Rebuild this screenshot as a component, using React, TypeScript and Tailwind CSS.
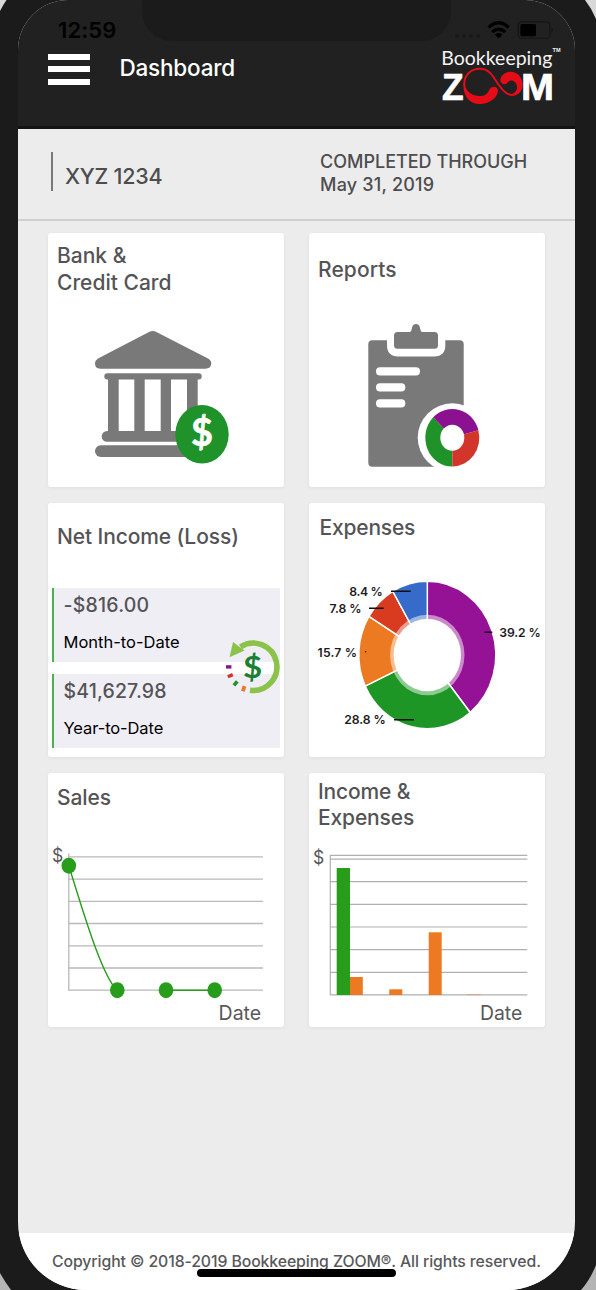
import type { ReactNode } from 'react';

const expenses = [
  { share: 39.2, color: '#951296' },
  { share: 28.8, color: '#1d9625' },
  { share: 15.7, color: '#ec7a22' },
  { share: 7.8, color: '#d93b20' },
  { share: 8.4, color: '#366bc9' },
];

const expenseLabels = [
  { text: '8.4 %', x: 40.2, y: 93, width: 33.6, from: 82, to: 101.7, tickY: 88.3 },
  { text: '7.8 %', x: 20.5, y: 109.7, width: 32, from: 60, to: 74.7, tickY: 105.3 },
  { text: '15.7 %', x: 8.6, y: 153.7, width: 39.4, from: 56.2, to: 57.2, tickY: 148.7 },
  { text: '28.8 %', x: 35.3, y: 221, width: 41.4, from: 85, to: 105, tickY: 216.7 },
  { text: '39.2 %', x: 190.3, y: 134.3, width: 41.4, from: 175.3, to: 183.3, tickY: 129.3 },
];

// Pie wedge on an ellipse, angles in degrees clockwise from the top
function wedge(cx: number, cy: number, rx: number, ry: number, start: number, end: number) {
  const point = (deg: number) => {
    const a = (deg * Math.PI) / 180;
    return `${(cx + rx * Math.sin(a)).toFixed(2)} ${(cy - ry * Math.cos(a)).toFixed(2)}`;
  };
  return `M${cx} ${cy} L${point(start)} A${rx} ${ry} 0 ${end - start > 180 ? 1 : 0} 1 ${point(end)} Z`;
}

function StatusBar() {
  return (
    <div className="flex h-[50px] justify-between">
      <div className="w-[124px] pt-[17px] pl-[40px] text-[22px] leading-[27px] font-semibold tracking-[0.1px] text-black">12:59</div>
      <div className="h-[41px] w-[309px] rounded-b-[30px] bg-[#1b1b1b]" />
      <svg className="h-[50px] w-[124px]" viewBox="451 0 124 50">
        <g fill="#191919">
          <circle cx="457" cy="36" r="2" />
          <circle cx="464" cy="36" r="2" />
          <circle cx="471" cy="36" r="2" />
          <circle cx="478" cy="36" r="2" />
        </g>
        <g fill="none" stroke="#000" strokeWidth="3.4">
          <path d="M488.6 27.4 Q498.7 18.2 508.8 27.4" />
          <path d="M492.2 32 Q498.7 26.4 505.2 32" />
        </g>
        <path d="M494.8 34.6 Q498.7 31.6 502.6 34.6 L498.7 38.6 Z" fill="#000" />
        <rect x="518.2" y="21.8" width="31.6" height="16.6" rx="3.5" fill="none" stroke="#161616" strokeWidth="1.4" />
        <rect x="520.4" y="24" width="15.6" height="12.2" rx="1.5" fill="#000" />
        <path d="M551.6 27.5 Q554 30 551.6 33 Z" fill="#141414" />
      </svg>
    </div>
  );
}

function Logo() {
  return (
    <svg className="h-[64px] w-[126px]" viewBox="436 44 126 64">
      <text x="441.3" y="64.9" fontSize="19" textLength="111" lengthAdjust="spacingAndGlyphs" fill="#f4f4f4" fontFamily="Lato, sans-serif">Bookkeeping</text>
      <text x="552.5" y="51.8" fontSize="6" fontWeight="700" textLength="8" lengthAdjust="spacingAndGlyphs" fill="#f4f4f4" fontFamily="Liberation Sans, sans-serif">TM</text>
      <g fill="#fff" stroke="#fff" strokeWidth="0.7" fontSize="37.4" fontWeight="700" fontFamily="Liberation Sans, sans-serif">
        <text x="441.9" y="99.5" textLength="21.6" lengthAdjust="spacingAndGlyphs">Z</text>
        <text x="521" y="99.5" textLength="33" lengthAdjust="spacingAndGlyphs">M</text>
      </g>
      <path d="M464.3 86 C463.5 75 471 68.8 480 68.8 C491 68.8 494 79 500 86.5 C504 92 507 95 512 95" fill="none" stroke="#e50c17" strokeWidth="2" />
      <path d="M463.4 84 C463 97 470 104 480 104 C489 104 497 98.5 498 91 C497.8 85.6 491.2 85.6 489.2 90 C487 94.5 484 96.6 478.5 96 C470.5 95 465.4 91 465.2 84 Z" fill="#e50c17" />
      <path d="M511.5 96 C518.5 95.8 522.6 91 522.6 85 C522.6 77 517 71.8 511 71.8 C505 71.8 500.8 76 500.3 80 C500.3 84.4 505.8 85.4 507.6 82.6 C509.5 80 513 79.8 515.3 82.6 C518.5 87 517.5 92 511.5 94.2 Z" fill="#e50c17" />
    </svg>
  );
}

function Card({ children }: { children: ReactNode }) {
  return <section className="h-[254px] overflow-hidden rounded-[3px] bg-white shadow-[0_1px_4px_rgba(0,0,0,0.06)]">{children}</section>;
}

function BankIcon() {
  return (
    <svg className="h-[184px] w-[236px]" viewBox="0 70 236 184">
      <g fill="#797979">
        <path d="M101 99 Q104.7 97 108.4 99 L160 125.6 Q163.3 127.6 163.3 130.5 Q162.8 135.7 157.5 135.7 H52.3 Q47.2 135.7 47 130.5 Q47 127.6 50 125.6 Z" />
        <rect x="56.3" y="140.2" width="97.4" height="6.2" rx="3" />
        <rect x="60" y="144" width="10.7" height="56" />
        <rect x="86.3" y="144" width="10.4" height="56" />
        <rect x="112.7" y="144" width="10.3" height="56" />
        <rect x="139" y="144" width="10.7" height="56" />
        <rect x="53.7" y="198" width="102" height="10.8" rx="5.4" />
        <rect x="47" y="212.3" width="116" height="11.7" rx="5.8" />
      </g>
      <ellipse cx="154" cy="201.3" rx="26.7" ry="29.3" fill="#1f9229" />
      <text x="143" y="213" fontSize="38" fontWeight="700" textLength="22" lengthAdjust="spacingAndGlyphs" fill="#fff" stroke="#fff" strokeWidth="0.6" strokeLinejoin="round" fontFamily="Lato, sans-serif">$</text>
    </svg>
  );
}

function ReportIcon() {
  return (
    <svg className="h-[184px] w-[236px]" viewBox="0 70 236 184">
      <rect x="59.3" y="107.2" width="95.4" height="126.5" rx="4" fill="#797979" />
      <path d="M78 106 V112 Q78 123.4 89 123.4 H125.3 Q136.3 123.4 136.3 112 V106 Z" fill="#fff" />
      <path d="M88.5 99 H101 Q102.4 98.4 103 95 Q103.6 91 107 91 Q110.4 91 111 95 Q111.6 98.4 113 99 H125.5 Q129 99 129 102.5 V112.2 Q129 115.7 125.5 115.7 H88.5 Q85 115.7 85 112.2 V102.5 Q85 99 88.5 99 Z" fill="#797979" />
      <g fill="#fff">
        <rect x="67" y="134.3" width="44" height="8.3" rx="4.1" />
        <rect x="67" y="150.3" width="29.3" height="8.1" rx="4" />
        <rect x="67" y="166.3" width="29.3" height="8.1" rx="4" />
        <ellipse cx="143.3" cy="204.7" rx="34.6" ry="34.4" />
      </g>
      <path d={wedge(143.3, 204.7, 27, 28.8, 180, 315)} fill="#1f9229" />
      <path d={wedge(143.3, 204.7, 27, 28.8, 315, 435)} fill="#8b1190" />
      <path d={wedge(143.3, 204.7, 27, 28.8, 75, 180)} fill="#d2352a" />
      <ellipse cx="143.3" cy="204.7" rx="12" ry="13" fill="#fff" />
    </svg>
  );
}

function NetIncomeIcon() {
  return (
    <svg className="absolute top-[130px] left-[170px] h-[66px] w-[66px]" viewBox="170 130 66 66">
      <path d="M202 187.3 A23.7 23.7 0 1 0 192.5 143.8" fill="none" stroke="#8bc34a" strokeWidth="5.6" />
      <path d="M185 139 L196.5 147.4 L181.5 154.2 Z" fill="#8bc34a" />
      <rect x="178" y="162.2" width="5.4" height="3.4" fill="#8b1190" />
      <rect x="179.6" y="171" width="5.4" height="3.4" transform="rotate(-24 182.3 172.7)" fill="#cf3528" />
      <rect x="185" y="178.6" width="5.2" height="3.6" transform="rotate(-50 187.6 180.4)" fill="#1f9229" />
      <rect x="193" y="183.8" width="5.4" height="3.8" transform="rotate(-72 195.7 185.7)" fill="#ec7a22" />
      <text x="195" y="174.8" fontSize="30.5" fontWeight="700" textLength="19.2" lengthAdjust="spacingAndGlyphs" fill="#1b7f34" fontFamily="Lato, sans-serif">$</text>
    </svg>
  );
}

function ExpensesChart() {
  let angle = 0;
  return (
    <svg className="h-[184px] w-[236px]" viewBox="0 70 236 184">
      {expenses.map((slice) => {
        const start = angle;
        angle += (slice.share / 99.9) * 360;
        return <path key={slice.color} d={wedge(118.3, 152, 68.5, 73.7, start, angle)} fill={slice.color} stroke="#fff" strokeWidth="1.5" />;
      })}
      <ellipse cx="118.3" cy="152" rx="37.2" ry="40.2" fill="#fff" fillOpacity="0.5" />
      <ellipse cx="118.3" cy="152" rx="33.7" ry="36.3" fill="#fff" />
      {expenseLabels.map((label) => (
        <g key={label.text}>
          <line x1={label.from} x2={label.to} y1={label.tickY} y2={label.tickY} stroke="#111" strokeWidth="1.5" />
          <text x={label.x} y={label.y} fontSize="12.2" fontWeight="600" textLength={label.width} fill="#1c1c1c">{label.text}</text>
        </g>
      ))}
    </svg>
  );
}

function SalesChart() {
  return (
    <svg className="h-[184px] w-[236px] font-normal" viewBox="0 70 236 184">
      <g stroke="#b9b9bb" strokeWidth="1.3">
        {[83.8, 106.1, 128.3, 150.5, 172.8, 195, 217.2].map((y) => (
          <line key={y} x1="20.8" x2="215" y1={y} y2={y} />
        ))}
        <line x1="20.8" x2="20.8" y1="80.5" y2="217.8" />
      </g>
      <text x="4" y="89" fontSize="18.5" textLength="11.3" lengthAdjust="spacingAndGlyphs" fill="#58585a">$</text>
      <path d="M20.8 92.7 C34 135 54 204 69.3 217.2 M118 217.2 H166.7" fill="none" stroke="#279d1b" strokeWidth="1.4" />
      <g fill="#279d1b">
        <ellipse cx="20.8" cy="92.7" rx="7.3" ry="8" />
        <ellipse cx="69.3" cy="217.2" rx="7.3" ry="8" />
        <ellipse cx="118" cy="217.2" rx="7.3" ry="8" />
        <ellipse cx="166.7" cy="217.2" rx="7.3" ry="8" />
      </g>
      <text x="170.6" y="247" fontSize="20" textLength="42.5" lengthAdjust="spacingAndGlyphs" fill="#58585a">Date</text>
    </svg>
  );
}

function IncomeChart() {
  return (
    <svg className="h-[184px] w-[236px] font-normal" viewBox="0 70 236 184">
      <g stroke="#b0b0b2" strokeWidth="1.2">
        {[82.4, 86.1, 108.7, 131.3, 154, 176.7, 199.3, 221.8].map((y) => (
          <line key={y} x1="21" x2="218.3" y1={y} y2={y} />
        ))}
        <line x1="21.3" x2="21.3" y1="82" y2="222" />
      </g>
      <text x="4" y="91" fontSize="18.5" textLength="11.3" lengthAdjust="spacingAndGlyphs" fill="#58585a">$</text>
      <rect x="27.7" y="95" width="13.3" height="127" fill="#279d1b" />
      <g fill="#ec7a22">
        <rect x="41" y="204" width="12.8" height="18" />
        <rect x="80.3" y="216.3" width="13" height="5.7" />
        <rect x="119.7" y="159.3" width="13" height="62.7" />
        <rect x="158" y="221.4" width="14" height="0.7" fillOpacity="0.6" />
      </g>
      <text x="171" y="247" fontSize="20" textLength="42.3" lengthAdjust="spacingAndGlyphs" fill="#58585a">Date</text>
    </svg>
  );
}

export default function App() {
  return (
    <div className="relative h-[1290px] w-[596px] overflow-hidden bg-[#1b1b1b] pr-[21px] pl-[18px] font-[Inter,sans-serif]">
      <div className="flex h-[1290px] flex-col overflow-hidden rounded-t-[50px] rounded-b-[68px] bg-[#ececec]">
        <header className="h-[129px] border-b-[3px] border-[#141414] bg-[#212121]">
          <StatusBar />
          <div className="-mt-[6px] flex items-start pl-[30px]">
            <button className="mt-[9.5px] flex w-[42px] flex-col gap-[6.5px]" aria-label="Menu">
              <span className="h-[6px] w-full bg-white" />
              <span className="h-[6px] w-full bg-white" />
              <span className="h-[6px] w-full bg-white" />
            </button>
            <h1 className="mt-[10px] ml-[29.5px] flex-1 text-[22.5px] leading-[28px] font-medium tracking-[-0.2px] text-white">Dashboard</h1>
            <div className="mr-[13px]">
              <Logo />
            </div>
          </div>
        </header>

        <div className="flex h-[92px] border-b-2 border-[#d0d0d1] text-[#4d4d4f]">
          <div className="ml-[33px] mt-[23px] flex h-[39px] w-[269px] border-l-2 border-[#79797b] pt-[11px] pl-[12px] text-[21.5px] leading-[26px] font-medium tracking-[-0.25px]">XYZ 1234</div>
          <div className="mt-[22px] text-[18px] leading-[22.5px] font-medium">
            <div>COMPLETED THROUGH</div>
            <div className="tracking-[0.2px]">May 31, 2019</div>
          </div>
        </div>

        <main className="grid flex-1 grid-cols-[236px_236px] content-start gap-x-[25px] gap-y-[16px] pt-[12px] pl-[30px] text-[21px] leading-[26.5px] font-medium text-[#545456]">
          <Card>
            <h2 className="h-[70px] pt-[10px] pl-[9px]">Bank &amp;<br />Credit Card</h2>
            <BankIcon />
          </Card>
          <Card>
            <h2 className="h-[70px] pt-[23.5px] pl-[9px] tracking-[0.1px]">Reports</h2>
            <ReportIcon />
          </Card>
          <Card>
            <div className="relative h-[254px] pr-[4px] pl-[4px]">
              <h2 className="h-[85px] pt-[20.5px] pl-[5px] tracking-[-0.1px]">Net Income (Loss)</h2>
              <div className="h-[74px] border-l-2 border-[#4caf50] bg-[#efeef5] pt-[5px] pl-[9.5px]">
                <div className="text-[19.5px] leading-[24px] tracking-[0.2px]">-$816.00</div>
                <div className="mt-[14.5px] text-[16.5px] leading-[20px] font-normal text-black">Month-to-Date</div>
              </div>
              <div className="mt-[12px] h-[74px] border-l-2 border-[#4caf50] bg-[#efeef5] pt-[5px] pl-[9.5px]">
                <div className="text-[19.5px] leading-[24px] tracking-[0.15px]">$41,627.98</div>
                <div className="mt-[14.5px] text-[16.5px] leading-[20px] font-normal tracking-[-0.1px] text-black">Year-to-Date</div>
              </div>
              <NetIncomeIcon />
            </div>
          </Card>
          <Card>
            <h2 className="h-[70px] pt-[12px] pl-[10.5px] tracking-[-0.2px]">Expenses</h2>
            <ExpensesChart />
          </Card>
          <Card>
            <h2 className="h-[70px] pt-[12px] pl-[9px] tracking-[-0.1px]">Sales</h2>
            <SalesChart />
          </Card>
          <Card>
            <h2 className="h-[70px] pt-[5.5px] pl-[9px] tracking-[-0.15px]">Income &amp;<br />Expenses</h2>
            <IncomeChart />
          </Card>
        </main>

        <footer className="relative h-[57px] bg-white pt-[19px] pl-[34px] text-[15.8px] leading-[20px] font-medium tracking-[-0.09px] whitespace-nowrap text-[#58585a]">
          Copyright © 2018-2019 Bookkeeping ZOOM®. All rights reserved.
          <div className="absolute top-[36px] left-[179px] h-[8px] w-[199px] rounded-full bg-black" />
        </footer>
      </div>

      {/* Background showing past the outer corners of the device */}
      <svg className="pointer-events-none absolute inset-0 h-[1290px] w-[596px]" viewBox="0 0 596 1290">
        <path d="M0 0 H6.5 Q3 5 0 11 Z M596 0 H585 Q592 9 596 19 Z" fill="#d8d8d8" />
        <path d="M0 1273 Q5 1282 11 1290 H0 Z M596 1265 Q590 1280 581 1290 H596 Z" fill="#b4b4b4" />
      </svg>
    </div>
  );
}
